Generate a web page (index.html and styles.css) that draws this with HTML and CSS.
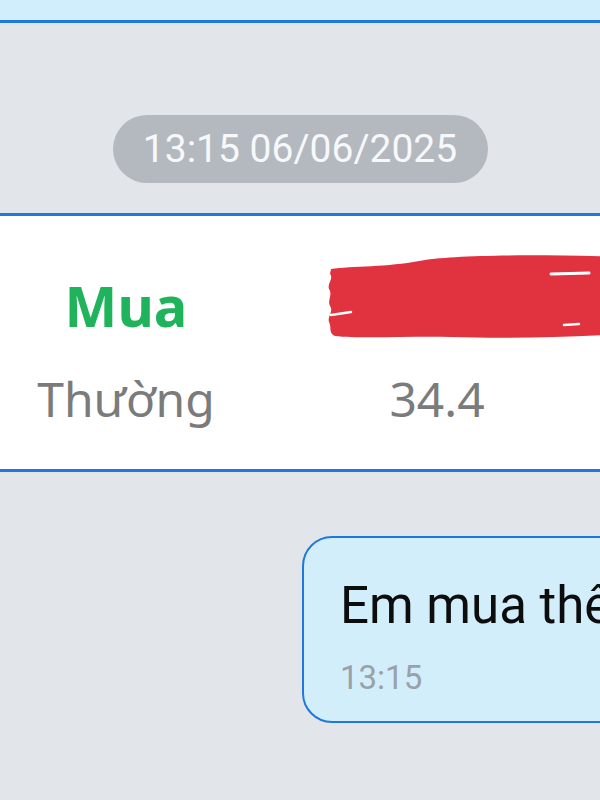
FILE: index.html
```html
<!DOCTYPE html>
<html lang="vi">
<head>
  <meta charset="UTF-8" />
  <title>Tin nhắn</title>
  <link rel="stylesheet" href="styles.css">
</head>
<body>
  <div class="topbar"></div>

  <div class="stamp-row">
    <span class="stamp">13:15 06/06/2025</span>
  </div>

  <div class="card">
    <div class="cell side-buy">Mua</div>
    <div class="cell hidden-value">
      <svg class="redact" width="300" height="90" viewBox="0 0 300 90">
        <path d="M4,14 C24,11 62,12 92,6 C124,0 200,-1 300,2 L300,79 C240,82 186,84 124,82 C82,81 34,84 8,81 C1,78 5,72 2,67 C0,61 7,57 3,51 C0,45 6,40 2,34 C0,28 7,24 3,19 Z" fill="#e0323f"/>
        <path d="M224,19 L262,18" stroke="#fff" stroke-width="3" stroke-linecap="round"/>
        <path d="M237,70 L252,69" stroke="#fff" stroke-width="2.5" stroke-linecap="round"/>
        <path d="M4,60 L24,57" stroke="#fff" stroke-width="2.5" stroke-linecap="round"/>
      </svg>
    </div>
    <div class="cell label">Thường</div>
    <div class="cell label">34.4</div>
  </div>

  <div class="bubble">
    <div class="bubble-text">Em mua thêm</div>
    <div class="bubble-time">13:15</div>
  </div>
</body>
</html>
```

FILE: styles.css
```css
body { margin: 0; width: 600px; height: 800px; overflow: hidden; background: #e2e6ea; font-family: Roboto, "Noto Sans", sans-serif; }

.topbar { height: 20px; background: #d0eefb; border-bottom: 3px solid #1f78dd; }

.stamp-row { display: flex; justify-content: center; margin-top: 92px; }
.stamp { display: block; width: 375px; height: 68px; line-height: 68px; text-align: center; border-radius: 34px; background: #b4b8bf; color: #f7f8f9; font-size: 39px; }

.card { margin-top: 30px; background: #fff; border-top: 3px solid #1f78dd; border-bottom: 3px solid #1f78dd; display: grid; grid-template-columns: 252px 370px; row-gap: 29px; padding: 54px 0 40px; overflow: hidden; font-family: "Noto Sans", sans-serif; }
.cell { text-align: center; position: relative; }
.side-buy { font-size: 56px; line-height: 70px; font-weight: bold; color: #1fb35b; }
.label { font-size: 48px; line-height: 60px; color: #7b7b7b; }
.redact { position: absolute; left: 75px; top: -15px; }

.bubble { margin: 64px 0 0 302px; width: 420px; box-sizing: border-box; padding: 38px 0 23px 36px; background: #d2eefb; border: 2.5px solid #1f78dd; border-radius: 30px; }
.bubble-text { font-size: 51px; line-height: 60px; color: #0d0d0d; white-space: nowrap; }
.bubble-time { margin-top: 22px; font-size: 33px; line-height: 40px; color: #9aa1a9; }
```
